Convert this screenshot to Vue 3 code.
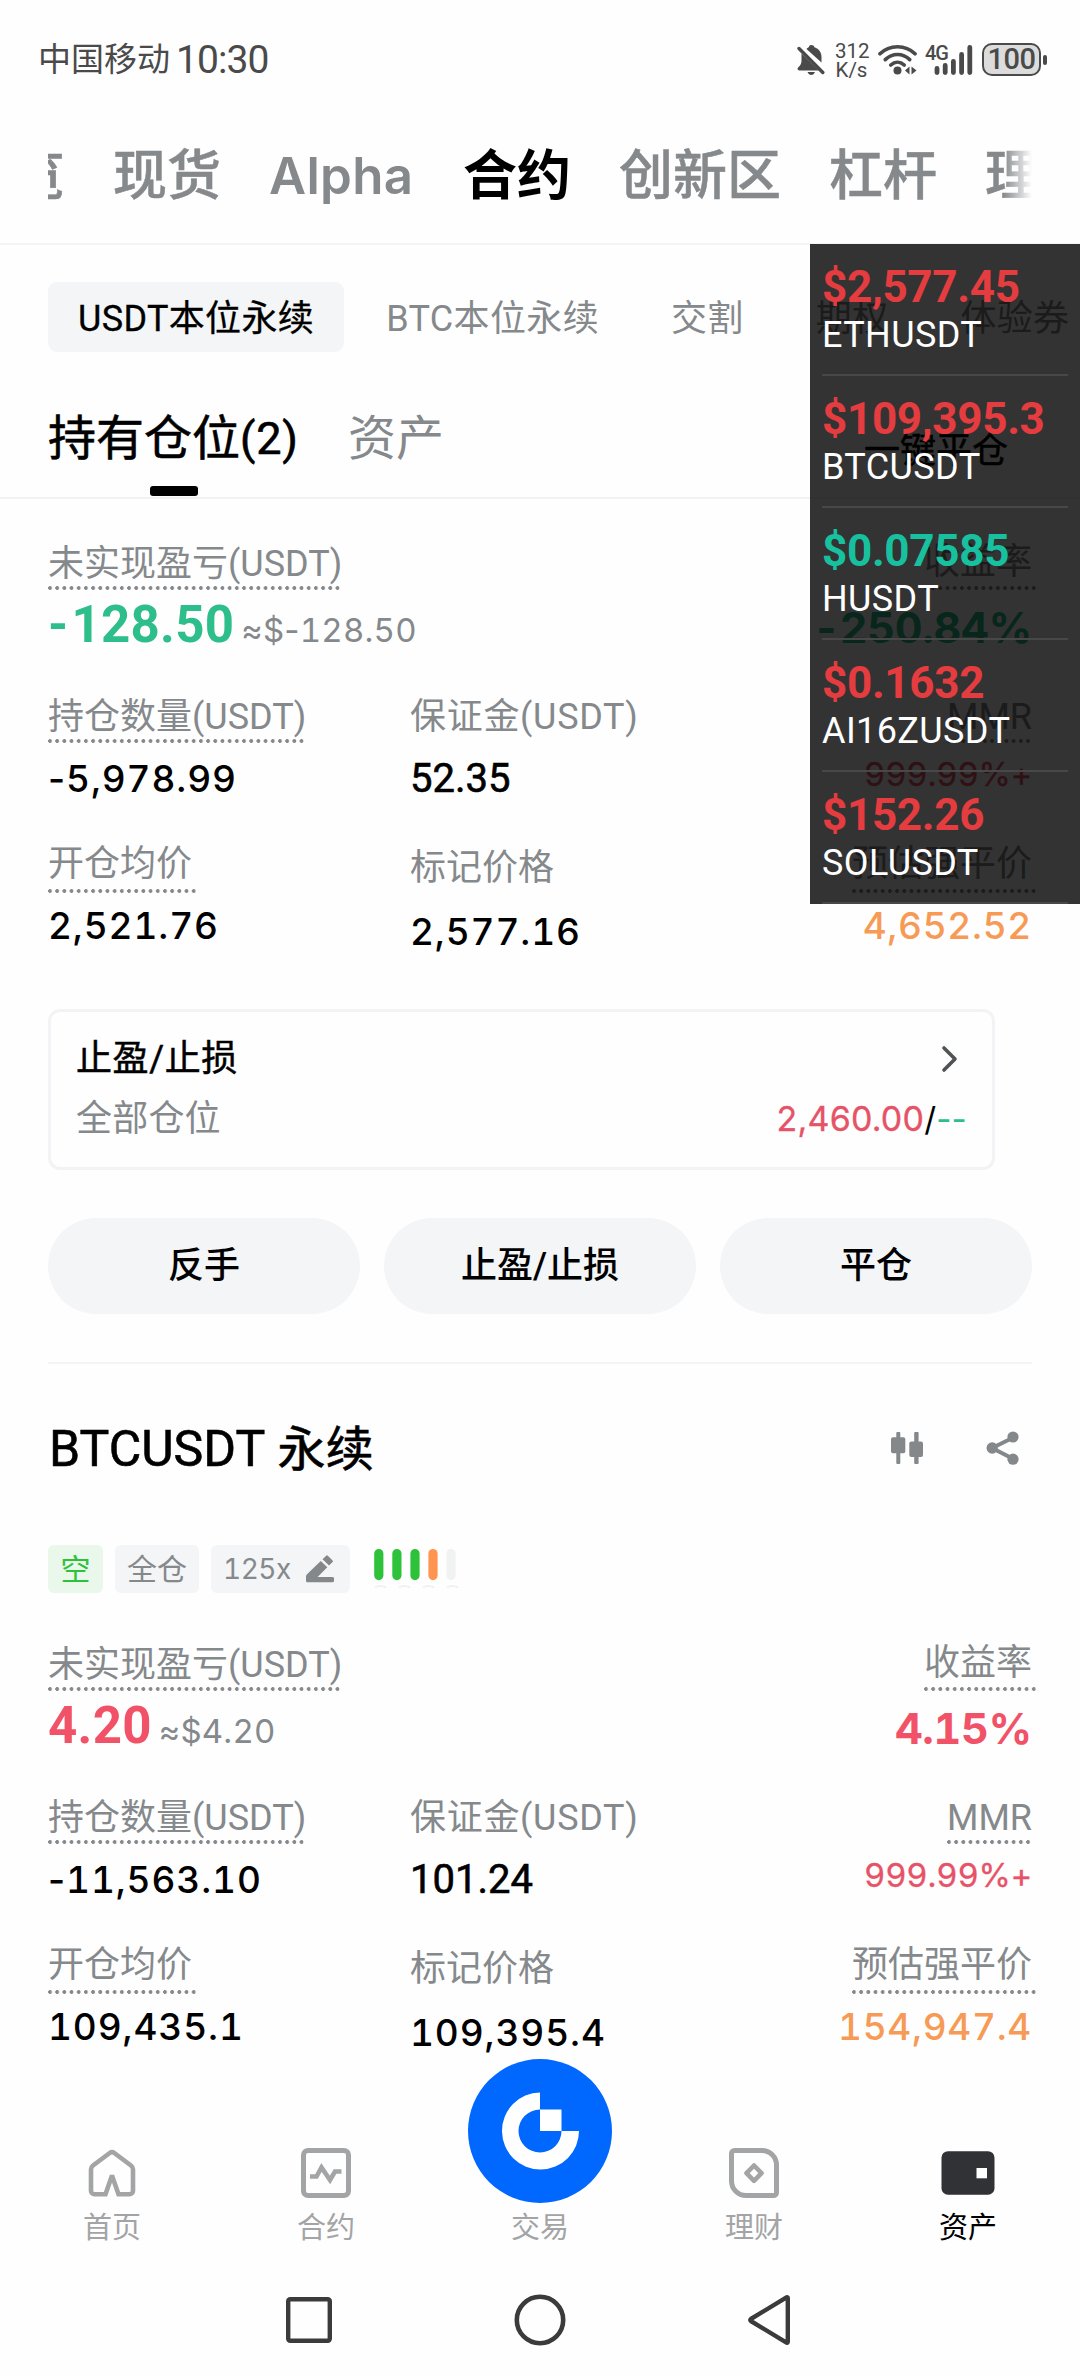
<script setup>
const topTabs = ['览', '现货', 'Alpha', '合约', '创新区', '杠杆', '理财']
const subTabs = ['USDT本位永续', 'BTC本位永续', '交割', '期权', '体验券']
const tickers = [
  { price: '$2,577.45', name: 'ETHUSDT', up: false },
  { price: '$109,395.3', name: 'BTCUSDT', up: false },
  { price: '$0.07585', name: 'HUSDT', up: true },
  { price: '$0.1632', name: 'AI16ZUSDT', up: false },
  { price: '$152.26', name: 'SOLUSDT', up: false },
]
const positions = [
  { id: 'eth', tone: 'green', pnl: '-128.50', usd: '≈$-128.50', roi: '-250.84%', size: '-5,978.99', margin: '52.35', mmr: '999.99%+', entry: '2,521.76', mark: '2,577.16', liq: '4,652.52' },
  { id: 'btc', tone: 'red', pnl: '4.20', usd: '≈$4.20', roi: '4.15%', size: '-11,563.10', margin: '101.24', mmr: '999.99%+', entry: '109,435.1', mark: '109,395.4', liq: '154,947.4' },
]
// The minus sign keeps its proportional width while the digits are tabular.
const parts = (s) => s.split(/(-)/).filter(Boolean)
</script>

<template>
  <div class="screen">
    <header class="status">
      <div class="carrier"><span>中国移动</span><span class="clock">10:30</span></div>
      <div class="indicators">
        <svg class="bell" viewBox="0 0 28 32" width="28" height="32">
          <path d="M14 1c1.800 0 3 .9 3.500 2.200 4.500 1.500 7 5 7 9.800v5.500L9.500 5C10.300 4 11.500 3.400 12 3.100 12 1.800 12.800 1 14 1zM4.500 9.500 22 26.500H2.200c-1.800 0-2.200-2-.9-3.200 2-1.800 3.200-3.300 3.200-6.800zM10.500 28h7.500c-.8 2-2.100 3-3.700 3-1.700 0-3-1-3.800-3z" fill="#4a4a4a" />
          <path d="M2 4.500 25.800 28.500" stroke="#4a4a4a" stroke-width="3.400" stroke-linecap="round" />
        </svg>
        <div class="speed"><span>312</span><span>K/s</span></div>
        <svg class="wifi" viewBox="0 0 40 32" width="40" height="32">
          <g fill="none" stroke="#4a4a4a" stroke-width="3.700" stroke-linecap="round">
            <path d="M2 9.800C11.500.4 27.500.4 37 9.800" /><path d="M7.300 15.600c7-6.800 17.400-6.800 24.400 0" /><path d="M12.800 21c4-3.700 9.400-3.700 13.400 0" />
          </g>
          <circle cx="19.500" cy="26.500" r="4" fill="#4a4a4a" />
          <path d="M31.500 22.500v8l-4.500-4zM33.500 22.500v8l5-4z" fill="#4a4a4a" />
        </svg>
        <div class="cell">
          <svg viewBox="0 0 46 32" width="46" height="32">
            <g stroke="#4a4a4a" stroke-width="4.800" stroke-linecap="round">
              <path d="M9 24.400v4.200M17.200 21.400v7.200M25.400 17.400v11.200M33.600 10.400v18.200M41.800 3.400v25.200" />
            </g>
          </svg>
          <span class="gen">4G</span>
        </div>
        <div class="battery"><span>100</span></div>
        <i class="nub"></i>
      </div>
    </header>

    <nav class="top-tabs">
      <div class="top-track">
        <span v-for="t in topTabs" :key="t" :class="{ on: t === '合约', latin: t === 'Alpha' }">{{ t }}</span>
      </div>
    </nav>

    <nav class="sub-tabs">
      <span v-for="(t, i) in subTabs" :key="t" :class="{ on: i === 0 }">{{ t }}</span>
    </nav>

    <div class="holding">
      <div class="hold-tab on">持有仓位<b>(2)</b><i></i></div>
      <div class="hold-tab">资产</div>
      <div class="close-all">一键平仓</div>
    </div>

    <template v-for="p in positions" :key="p.id">
      <section v-if="p.id === 'btc'" class="pair">
        <div class="pair-head">
          <h2><span>BTCUSDT</span> 永续</h2>
          <svg viewBox="0 0 32 34" width="32" height="34" fill="#84888b">
            <rect x="5.300" y="1" width="4" height="32" rx="1" /><rect x="0" y="6.300" width="14.300" height="16" rx="2" />
            <rect x="23.200" y="1" width="4.400" height="32" rx="1" /><rect x="18.300" y="10.500" width="13.700" height="15.500" rx="2" />
          </svg>
          <svg class="share" viewBox="0 0 34 34" width="34" height="34" fill="#84888b">
            <path d="M27.500 6.500 6 17l21.500 11" fill="none" stroke="#84888b" stroke-width="4" />
            <circle cx="6.200" cy="17" r="5.700" /><circle cx="27" cy="6" r="5.600" /><circle cx="27" cy="28.200" r="5.600" />
          </svg>
        </div>
        <div class="tags">
          <span class="tag short">空</span>
          <span class="tag cross">全仓</span>
          <span class="tag lever">125x
            <svg viewBox="0 0 28 28" width="28" height="28" fill="#84888b">
              <path d="M20.200.700a1.200 1.200 0 0 1 1.600 0l4.800 4.700a1.200 1.200 0 0 1 0 1.600L23 10.500 16.500 4.200zM14.800 5.900l6.500 6.300L11.600 22H26a2 2 0 0 1 0 5.200H1.300A1.300 1.300 0 0 1 0 26v-4.500c0-1 .4-1.700 1-2.300z" />
            </svg>
          </span>
          <svg class="risk" viewBox="0 0 88 42" width="88" height="42">
            <g stroke-width="9.200" stroke-linecap="round">
              <path d="M4.800 5.600v22M22.900 5.600v22M41 5.600v22" stroke="#2dc239" /><path d="M59 5.600v22" stroke="#ff9450" /><path d="M77 5.600v22" stroke="#f1f2f2" />
            </g>
            <path d="M1 39.500q5-3 11 0M25 39.500q5-3 11 0M49 39.500q5-3 11 0M73 39.500q5-3 11 0" fill="none" stroke="#f0f1f1" stroke-width="2" />
          </svg>
        </div>
      </section>

      <section class="stats">
        <div class="row r1">
          <div class="cell-a wide">
            <div class="label dots">未实现盈亏(USDT)</div>
            <div class="pnl" :class="p.tone">
              <strong><span v-for="(s, i) in parts(p.pnl)" :key="i" :class="{ neg: s === '-' }">{{ s }}</span></strong>
              <div class="usd"><span v-for="(s, i) in parts(p.usd)" :key="i" :class="{ neg: s === '-' }">{{ s }}</span></div>
            </div>
          </div>
          <div class="cell-c">
            <div class="label dots over up">收益率</div>
            <div class="roi" :class="p.tone">{{ p.roi }}</div>
          </div>
        </div>
        <div class="row r2">
          <div class="cell-a">
            <div class="label dots">持仓数量(USDT)</div>
            <div class="num"><span v-for="(s, i) in parts(p.size)" :key="i" :class="{ neg: s === '-' }">{{ s }}</span></div>
          </div>
          <div class="cell-b">
            <div class="label spaced">保证金(USDT)</div>
            <div class="num plain">{{ p.margin }}</div>
          </div>
          <div class="cell-c">
            <div class="label dots">MMR</div>
            <div class="mmr">{{ p.mmr }}</div>
          </div>
        </div>
        <div class="row r3">
          <div class="cell-a">
            <div class="label dots over">开仓均价</div>
            <div class="num">{{ p.entry }}</div>
          </div>
          <div class="cell-b">
            <div class="label">标记价格</div>
            <div class="num">{{ p.mark }}</div>
          </div>
          <div class="cell-c">
            <div class="label dots over">预估强平价</div>
            <div class="num liq">{{ p.liq }}</div>
          </div>
        </div>
      </section>

      <template v-if="p.id === 'eth'">
        <section class="tpsl">
          <div class="tpsl-row first">
            <span>止盈/止损</span>
            <svg viewBox="0 0 18 28" width="18" height="28"><path d="M3 3l11 11L3 25" fill="none" stroke="#505356" stroke-width="3.600" stroke-linecap="round" stroke-linejoin="round" /></svg>
          </div>
          <div class="tpsl-row second">
            <span>全部仓位</span>
            <div class="levels"><em>2,460.00</em>/<u>--</u></div>
          </div>
        </section>
        <div class="actions">
          <button>反手</button><button>止盈/止损</button><button>平仓</button>
        </div>
        <hr class="split" />
      </template>
    </template>

    <footer class="tabbar">
      <div class="tab">
        <svg viewBox="0 0 50 50" width="50" height="50" fill="none" stroke="#a3a4a5" stroke-width="4.600" stroke-linejoin="round">
          <path d="M18.500 46.200H7.500a3.500 3.500 0 0 1-3.500-3.500V21.500a5 5 0 0 1 2-4L22.700 5a3.800 3.800 0 0 1 4.600 0L44 17.500a5 5 0 0 1 2 4v21.200a3.500 3.500 0 0 1-3.500 3.500h-11L25.500 29h-1z" stroke-linejoin="miter" />
        </svg>
        <span>首页</span>
      </div>
      <div class="tab">
        <svg viewBox="0 0 50 50" width="50" height="50" fill="none" stroke="#a3a4a5">
          <rect x="2.500" y="2.500" width="45" height="45" rx="4.500" stroke-width="5" />
          <path d="M9 28.500h6.500l5-9 8.500 12.500 5-8.500h6.500" stroke-width="4.600" />
        </svg>
        <span>合约</span>
      </div>
      <div class="tab">
        <svg viewBox="0 0 144 144" width="144" height="144">
          <circle cx="72" cy="72" r="72" fill="#0068ff" />
          <path d="M72 33.500A38.500 38.500 0 1 0 111 72H93.500A21.500 21.500 0 1 1 72 50.500z" fill="#fff" />
          <rect x="72" y="50.500" width="21.500" height="21.500" fill="#fff" />
        </svg>
        <span>交易</span>
      </div>
      <div class="tab">
        <svg viewBox="0 0 50 50" width="50" height="50" fill="none" stroke="#a3a4a5" stroke-width="5" stroke-linejoin="round">
          <path d="M5.500 2.500H33A14.500 14.500 0 0 1 47.500 17v27.500a3 3 0 0 1-3 3H17A14.500 14.500 0 0 1 2.500 33V5.500a3 3 0 0 1 3-3z" />
          <path d="M25 17.500l7.500 7.700-7.500 7.600-7.500-7.600z" stroke-width="4.600" />
        </svg>
        <span>理财</span>
      </div>
      <div class="tab on">
        <svg viewBox="0 0 54 50" width="54" height="50">
          <rect x=".5" y="3.200" width="53" height="43.500" rx="6.500" fill="#313235" />
          <rect x="35.500" y="20" width="10.500" height="10.300" fill="#fff" />
        </svg>
        <span>资产</span>
      </div>
    </footer>

    <div class="sysnav">
      <svg viewBox="0 0 46 46" width="46" height="46"><rect x="2.200" y="2.200" width="41.600" height="41.600" rx="2" fill="none" stroke="#3b3b3b" stroke-width="4.400" /></svg>
      <svg viewBox="0 0 52 52" width="52" height="52"><circle cx="26" cy="26" r="23.200" fill="none" stroke="#3b3b3b" stroke-width="4.600" /></svg>
      <svg viewBox="0 0 44 52" width="44" height="52"><path d="M40.800 4v44a.8.8 0 0 1-1.300.6L3.800 27a1.200 1.200 0 0 1 0-2L39.500 3.400a.8.8 0 0 1 1.300.6z" fill="none" stroke="#3b3b3b" stroke-width="4.400" stroke-linejoin="round" /></svg>
    </div>

    <aside class="ticker">
      <div v-for="t in tickers" :key="t.name" class="tick">
        <b :class="{ up: t.up }">{{ t.price }}</b>
        <span>{{ t.name }}</span>
      </div>
    </aside>
  </div>
</template>

<style>
body { background: #fefefe; }
</style>

<style scoped>
* { box-sizing: border-box; }
.screen {
  position: relative;
  width: 1080px;
  height: 2376px;
  overflow: hidden;
  background: #fefefe;
  color: #000;
  font-family: Roboto, "Noto Sans CJK SC", sans-serif;
  font-size: 36px;
  white-space: nowrap;
}
svg { display: block; flex: none; }

.status { height: 105px; padding: 0 33px 0 38px; display: flex; justify-content: space-between; color: #4a4a4a; }
.carrier { display: flex; height: 120px; align-items: center; font-size: 33px; line-height: 40px; }
.clock { font-size: 39px; margin-left: 6px; letter-spacing: -0.9px; }
.indicators { display: flex; height: 119px; align-items: center; }
.speed { display: flex; flex-direction: column; font-size: 20.500px; line-height: 18.500px; margin: 2px 0 0 10px; width: 33px; text-align: center; }
.wifi { margin-left: 10px; }
.cell { position: relative; margin-left: 10px; }
.gen { position: absolute; left: -3px; top: 1px; font-size: 20px; font-weight: 500; line-height: 16px; letter-spacing: -1px; }
.battery { width: 59px; height: 33px; margin-left: 8px; border: 2.500px solid #4a4a4a; border-radius: 10px; background: #dcdcdc; font-size: 29px; font-weight: 500; line-height: 28px; text-align: center; letter-spacing: -0.4px; }
.nub { width: 4px; height: 10px; margin-left: 2px; border-radius: 2px; background: #4a4a4a; }

.top-tabs { position: relative; height: 140px; padding-left: 48px; border-bottom: 2px solid #f4f4f4; }
.top-track { width: 984px; height: 138px; padding-top: 5px; overflow: hidden; display: flex; gap: 48px; align-items: center; font-size: 54px; font-weight: 500; line-height: 64px; color: #85898c; -webkit-text-stroke: 0.5px; -webkit-mask: linear-gradient(90deg, #000 955px, transparent 984px); mask: linear-gradient(90deg, #000 955px, transparent 984px); }
.top-track span { flex: none; }
.top-track span:first-child { margin-left: -37px; }
.top-track .latin { width: 146px; margin-top: -2px; font-family: Inter, sans-serif; font-size: 51px; font-weight: 600; letter-spacing: 0.3px; -webkit-text-stroke: 0; }
.top-track .on { color: #000; font-weight: 700; -webkit-text-stroke: 0; }

.sub-tabs { display: flex; gap: 72px; height: 107px; padding: 37px 0 0 78px; color: #85898c; line-height: 75px; letter-spacing: 0.35px; }
.sub-tabs span { flex: none; height: 70px; }
.sub-tabs .on { color: #000; background: #f4f5f6; border-radius: 9px; padding: 0 30px; margin: 0 -30px; -webkit-text-stroke: 0.3px; }

.holding { display: flex; height: 147px; padding: 57px 72px 0 48px; border-bottom: 2px solid #f2f2f2; font-size: 48px; line-height: 60px; }
.hold-tab { display: flex; color: #85898c; margin-right: 48px; height: 60px; }
.hold-tab.on { position: relative; color: #000; width: 252px; -webkit-text-stroke: 0.6px; }
.hold-tab b { font-size: 45px; font-weight: 400; letter-spacing: 0.8px; }
.hold-tab i { position: absolute; left: 102px; top: 77px; width: 48px; height: 10px; border-radius: 3px; background: #000; }
.close-all { margin-left: auto; font-size: 36px; line-height: 85px; -webkit-text-stroke: 0.5px; }

.stats { padding: 41px 48px 0; height: 510px; }
.row { display: flex; }
.r1 { height: 153px; }
.r2 { height: 144px; }
.cell-a { width: 362px; display: flex; flex-direction: column; align-items: flex-start; }
.cell-b { width: 300px; display: flex; flex-direction: column; align-items: flex-start; }
.cell-a.wide { width: 600px; }
.cell-c { flex: 1; display: flex; flex-direction: column; align-items: flex-end; }
.label { height: 50px; padding-top: 3px; line-height: 43px; color: #85898c; }
.label.spaced { letter-spacing: 0.7px; }
.dots { display: flex; flex-direction: column; }
.dots::after { content: ""; flex: none; height: 4px; background: radial-gradient(circle at 2px 2px, #85898c 1.600px, transparent 2.200px) 0 0 / 7.200px 4px repeat-x; }
.dots.over::after { margin-right: -4px; }
.label.up { line-height: 38px; }
.label.up::after { margin-top: 5px; }
.r3 .label { height: 56px; line-height: 49px; }
.r3 .cell-b .label { height: 59px; line-height: 56px; }
.green { color: #2dbe8b; }
.red { color: #f15267; }
.pnl { display: flex; align-items: baseline; margin-top: 11px; line-height: 48px; height: 47px; }
.pnl strong { font-size: 51px; font-weight: 700; letter-spacing: 0.3px; }
.pnl strong .neg { margin-right: 3px; }
.usd { margin-left: 7px; color: #85898c; font-family: Inter, sans-serif; font-feature-settings: "tnum"; font-size: 33px; letter-spacing: 0.2px; }
.neg { font-feature-settings: normal; }
.roi { margin-top: 12px; height: 50px; line-height: 50px; font-family: Inter, sans-serif; font-feature-settings: "tnum"; font-size: 43px; font-weight: 700; letter-spacing: -0.3px; }
.num { margin-top: 12px; height: 48px; line-height: 48px; font-family: Inter, sans-serif; font-feature-settings: "tnum"; font-size: 37px; font-weight: 500; letter-spacing: 0.9px; }
.num.plain { font-family: Roboto, sans-serif; font-size: 40px; font-weight: 400; line-height: 47px; letter-spacing: 0; -webkit-text-stroke: 0.6px; }
.mmr { margin-top: 12px; line-height: 39px; color: #e65368; font-family: Inter, sans-serif; font-feature-settings: "tnum"; font-size: 33px; letter-spacing: -0.2px; -webkit-text-stroke: 0.3px; }
.r3 .cell-a .num, .r3 .cell-c .num { margin-top: 9px; }
.num.liq { color: #f69a55; letter-spacing: 0.7px; }

.tpsl { width: 947px; height: 161px; margin-left: 48px; padding: 23px 25px 0; border: 3px solid #f2f3f4; border-radius: 12px; }
.tpsl-row { display: flex; justify-content: space-between; align-items: center; height: 48px; line-height: 48px; }
.first { padding-right: 8px; margin-bottom: 12px; letter-spacing: 0.6px; -webkit-text-stroke: 0.5px; }
.second { color: #85898c; letter-spacing: 0.2px; }
.levels { color: #000; font-family: Inter, sans-serif; font-size: 33px; display: flex; }
.levels em { font-style: normal; color: #e65368; font-size: 34px; -webkit-text-stroke: 0.3px; }
.levels u { text-decoration: none; color: #2dbe8b; }

.actions { display: flex; gap: 24px; padding: 48px 48px 0; }
.actions button { flex: 1; height: 96px; border: 0; border-radius: 48px; background: #f3f5f7; color: #000; font: 500 36px/94px Roboto, "Noto Sans CJK SC", sans-serif; padding: 0; }
.split { margin: 48px 48px 0; border: 0; height: 2px; background: #f4f4f4; }

.pair { height: 236px; }
.pair + .stats { height: 459px; }
.pair-head { display: flex; align-items: center; height: 168px; padding: 0 60px 0 49px; }
.pair-head h2 { margin: 2px auto 0 0; font-size: 48px; font-weight: 400; line-height: 60px; letter-spacing: 0.3px; -webkit-text-stroke: 0.6px; }
.pair-head h2 span { font-size: 50px; letter-spacing: 0; }
.share { margin-left: 63px; }
.tags { display: flex; align-items: center; padding: 13px 48px 0; }
.tag { height: 48px; border-radius: 6px; background: #f4f5f6; color: #85898c; font-size: 30px; line-height: 49px; text-align: center; }
.short { width: 55px; background: #eaf7eb; color: #2dc239; }
.cross { width: 84px; margin: 0 12px; }
.lever { width: 139px; display: flex; align-items: center; justify-content: space-between; padding: 0 16px 0 12px; font-family: Inter, sans-serif; font-feature-settings: "tnum"; font-size: 28px; letter-spacing: -0.5px; }
.risk { margin: 0 0 0 24px; }

.tabbar { display: flex; height: 187px; padding: 0 5px; }
.tab { flex: 1; display: flex; flex-direction: column; align-items: center; justify-content: flex-end; color: #a3a4a5; font-size: 29px; line-height: 36px; }
.tab svg { margin-bottom: 12px; }
.tab:nth-child(3) svg { margin-bottom: 7px; }
.tab.on { color: #000; }

.sysnav { display: flex; align-items: center; height: 130px; padding: 18px 0 0 286px; }
.sysnav svg:nth-child(2) { margin-left: 182px; }
.sysnav svg:nth-child(3) { margin-left: 181px; }

.ticker { position: absolute; left: 810px; top: 244px; width: 270px; height: 660px; padding: 0 12px; background: rgba(0, 0, 0, 0.8); }
.tick { height: 132px; padding-top: 18px; display: flex; flex-direction: column; border-bottom: 2px solid #484848; color: #fff; }
.tick b { font-size: 44px; font-weight: 700; line-height: 50px; letter-spacing: -0.3px; color: #e53c40; }
.tick b.up { color: #17c1a0; }
.tick span { line-height: 46px; letter-spacing: 0.4px; }
</style>
